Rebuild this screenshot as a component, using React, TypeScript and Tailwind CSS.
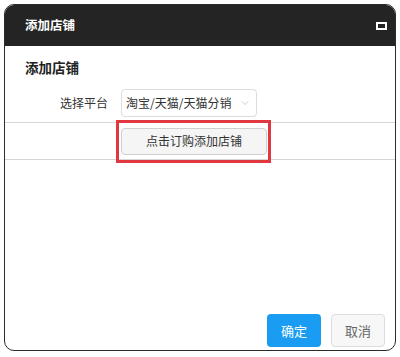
import { ChevronDown } from "lucide-react";

const FONT = "font-['Noto_Sans_CJK_SC','Noto_Sans',sans-serif]";

export default function App() {
  return (
    <div className={`w-[400px] h-[357px] bg-white pl-[4px] pt-[4px] ${FONT}`}>
      <div className="w-[392px] h-[347px] flex flex-col rounded-[10px] border border-[#2b2b2b] overflow-hidden bg-white">
        {/* header */}
        <div className="h-[41px] shrink-0 bg-[#242424] flex items-center justify-between pl-[20px] pr-[8px]">
          <span className="text-[12.5px] font-bold text-white leading-none">添加店铺</span>
          <span className="w-[11px] h-[8px] border-2 border-white bg-[#242424] box-border" />
        </div>

        {/* body */}
        <div className="flex-1 flex flex-col">
          <div className="pl-[20px] pt-[11px] text-[13.5px] font-bold text-[#222] leading-[20px]">添加店铺</div>

          <div className="flex items-center mt-[12px] pl-[20px]">
            <span className="w-[84px] text-right pr-[1px] text-[12px] text-[#333]">选择平台</span>
            <div className="ml-[12px] w-[136px] h-[28px] rounded-[4px] border border-[#dcdcdc] flex items-center justify-between pl-[4px] pr-[5px]">
              <span className="text-[12px] text-[#333]">淘宝/天猫/天猫分销</span>
              <ChevronDown className="w-[12px] h-[12px] text-[#b0b0b0]" strokeWidth={1.3} />
            </div>
          </div>

          <div className="mt-[5px] border-t border-b border-[#d6d6d6] h-[38px] flex items-center pl-[116px]">
            <div className="relative">
              <button className="w-[146px] h-[27px] rounded-[4px] border border-[#cfcfcf] bg-[#f5f5f5] text-[12px] text-[#333]">
                点击订购添加店铺
              </button>
              <div className="absolute -left-[5px] -top-[7px] -right-[4px] -bottom-[8px] border-[3px] border-[#e0383e] pointer-events-none" />
            </div>
          </div>

          <div className="flex-1" />

          <div className="flex justify-end gap-[10px] pr-[10px] pb-[3px]">
            <button className="w-[54px] h-[33px] rounded-[4px] bg-[#1a9cf2] text-white text-[13px]">确定</button>
            <button className="w-[54px] h-[33px] rounded-[4px] border border-[#dcdcdc] bg-[#f7f7f7] text-[#666] text-[13px]">取消</button>
          </div>
        </div>
      </div>
    </div>
  );
}
